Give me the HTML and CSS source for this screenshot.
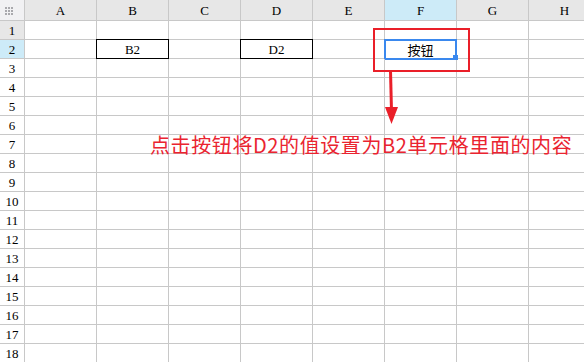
FILE: index.html
```html
<!DOCTYPE html>
<html lang="zh-CN">
  <head>
    <meta charset="utf-8" />
    <title>按钮示例</title>
    <link rel="stylesheet" href="styles.css">
  </head>
  <body>
    <div class="wrap">
      <div class="sheet" id="sheet"></div>

      <!-- annotation -->
      <div class="mark-box"></div>
      <svg class="arrow" width="20" height="60" viewBox="0 0 20 60">
        <line x1="6.5" y1="0" x2="7.5" y2="40" stroke="#ea1f29" stroke-width="3" />
        <polygon points="1,36 14,36 7.5,53" fill="#ea1f29" />
      </svg>
      <p class="note">点击按钮将D2的值设置为B2单元格里面的内容</p>
    </div>

    <script>
      const cols = ["A", "B", "C", "D", "E", "F", "G", "H"];
      const values = { B2: "B2", D2: "D2", F2: "按钮" };
      const sheet = document.getElementById("sheet");

      const corner = document.createElement("div");
      corner.className = "cell corner";
      corner.innerHTML = '<span class="dots"></span>';
      sheet.appendChild(corner);

      cols.forEach((c) => {
        const h = document.createElement("div");
        h.className = "cell col-head" + (c === "F" ? " active" : "");
        h.textContent = c;
        sheet.appendChild(h);
      });

      for (let r = 1; r <= 18; r++) {
        const rh = document.createElement("div");
        rh.className = "cell row-head";
        if (r === 1) rh.className += " hover";
        if (r === 2) rh.className += " active";
        rh.textContent = r;
        sheet.appendChild(rh);

        cols.forEach((c) => {
          const id = c + r;
          const cell = document.createElement("div");
          cell.className = "cell";
          if (id === "B2" || id === "D2") cell.className += " boxed";
          if (id === "F2") cell.className += " selected";
          cell.textContent = values[id] || "";
          sheet.appendChild(cell);
        });
      }
    </script>
  </body>
</html>
```

FILE: styles.css
```css
* {
  padding: 0;
  margin: 0;
  box-sizing: border-box;
}
body {
  background-color: #ffffff;
  overflow: hidden;
}
.wrap {
  position: relative;
  width: 584px;
  height: 362px;
  overflow: hidden;
}
.sheet {
  display: grid;
  grid-template-columns: 25px repeat(8, 72px);
  grid-template-rows: 21px;
  grid-auto-rows: 19px;
  width: 601px;
  font-family: "Liberation Serif", "Noto Sans CJK SC", serif;
  font-size: 13px;
  color: #000;
}
.cell {
  position: relative;
  border-right: 1px solid #c8c8c8;
  border-bottom: 1px solid #c8c8c8;
  display: flex;
  align-items: center;
  justify-content: center;
  line-height: 1;
}
.corner {
  background: #f1f1f3;
  justify-content: flex-start;
  align-items: flex-start;
}
.dots {
  position: absolute;
  left: 5px;
  top: 7px;
  width: 2px;
  height: 2px;
  background: #a9a9ad;
  box-shadow: 3px 0 #a9a9ad, 6px 0 #a9a9ad, 0 3px #a9a9ad, 3px 3px #a9a9ad,
    6px 3px #a9a9ad, 0 6px #a9a9ad, 3px 6px #a9a9ad, 6px 6px #a9a9ad;
}
.col-head {
  background: #e7e7e7;
  padding-top: 1px;
}
.row-head {
  background: #ffffff;
}
.row-head.hover {
  background: #e7e7e7;
}
.active {
  background: #cdebf8;
}
.boxed::after {
  content: "";
  position: absolute;
  left: -1px;
  top: -1px;
  right: -1px;
  bottom: -1px;
  border: 1px solid #000;
}
.selected {
  font-family: "Noto Sans CJK SC", sans-serif;
  font-size: 13px;
}
.selected::after {
  content: "";
  position: absolute;
  left: -1px;
  top: -1px;
  right: -1px;
  bottom: -2px;
  border: 2px solid #3a88ee;
}
.selected::before {
  content: "";
  position: absolute;
  right: -2px;
  bottom: -2px;
  width: 5px;
  height: 5px;
  background: #3a88ee;
  z-index: 1;
}
.mark-box {
  position: absolute;
  left: 373px;
  top: 28px;
  width: 97px;
  height: 44px;
  border: 2px solid #ea1f29;
}
.arrow {
  position: absolute;
  left: 384px;
  top: 71px;
}
.note {
  position: absolute;
  left: 150px;
  top: 131px;
  font-family: "Noto Sans CJK SC", sans-serif;
  font-size: 20px;
  letter-spacing: 0.6px;
  line-height: 28px;
  color: #ea2430;
  white-space: nowrap;
}
```
